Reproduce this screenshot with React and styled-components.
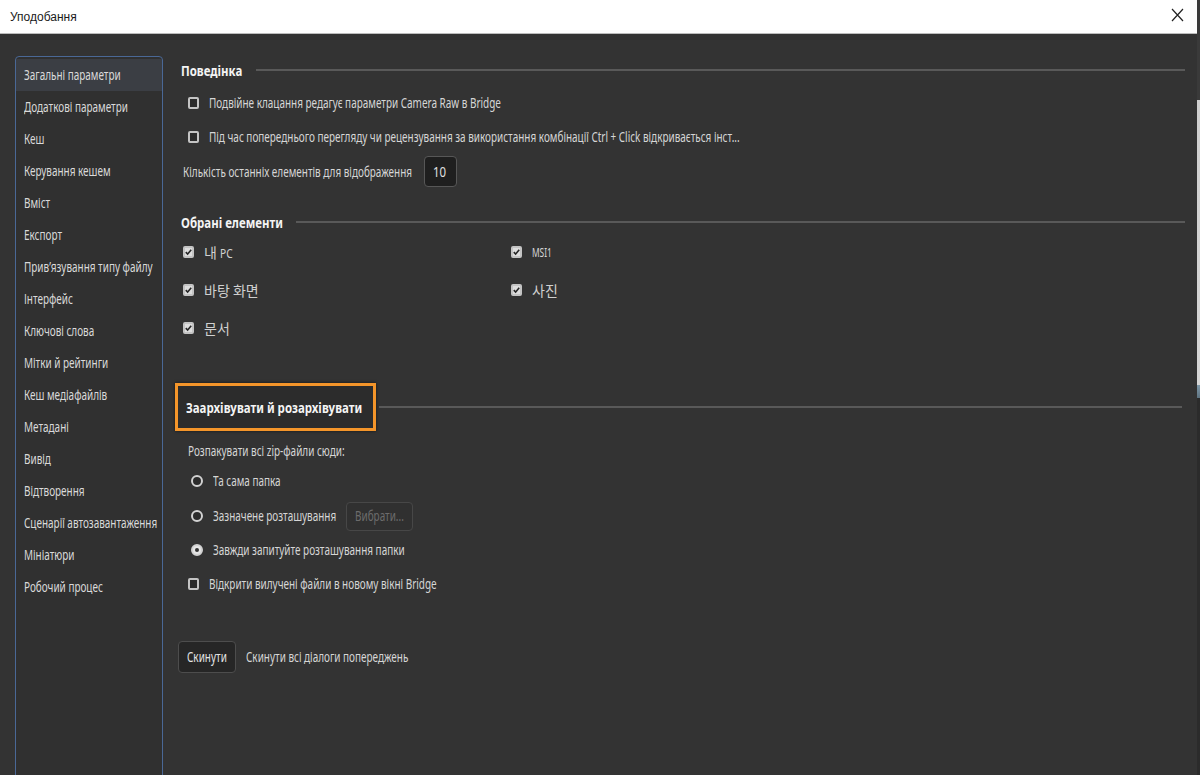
import React, { useLayoutEffect, useRef, useState } from 'react'
import styled, { createGlobalStyle } from 'styled-components'

const GlobalStyle = createGlobalStyle`
  html, body {
    margin: 0;
    padding: 0;
    width: 1200px;
    height: 775px;
    overflow: hidden;
    background: #2c2c2c;
  }
  * {
    box-sizing: border-box;
  }
`

const UI_FONT = `"Noto Sans", "Liberation Sans", "Noto Sans CJK KR", sans-serif`

// the original UI font is a condensed one, we squeeze Noto Sans to its width
const TEXT_SCALE = 0.737
const HEADER_SCALE = 0.79

const Screen = styled.div`
  display: flex;
  width: 1200px;
  height: 775px;
`

const Dialog = styled.div`
  flex: 1;
  display: flex;
  flex-direction: column;
  background: #333333;
  font-family: ${UI_FONT};
`

// piece of the window behind the dialog
const EdgeStrip = styled.div`
  width: 3px;
  background: linear-gradient(
    to bottom,
    #3a3a3a 0px,
    #3a3a3a 100px,
    #cfcfcf 100px,
    #d6d6d6 385px,
    #7f98a8 385px,
    #5d7280 398px,
    #2b2b2b 398px,
    #2b2b2b 775px
  );
`

const TitleBar = styled.div`
  height: 34px;
  flex: none;
  display: flex;
  align-items: center;
  justify-content: space-between;
  padding: 0 10px 0 10px;
  background: #ffffff;
  border-bottom: 1px solid #bcbcbc;
  color: #1b1b1b;
  font-family: "Liberation Sans", "Noto Sans", sans-serif;
  font-size: 12px;
`

const CloseButton = styled.div`
  width: 14px;
  height: 14px;
  margin-right: 2px;
  margin-top: -4px;
  display: flex;
`

const Body = styled.div`
  flex: 1;
  display: flex;
  min-height: 0;
`

const Sidebar = styled.nav`
  width: 148px;
  flex: none;
  margin: 22px 0 -12px 15px;
  border: 1px solid #4a6896;
  border-radius: 4px;
  background: #303030;
  padding-top: 2px;
`

const NavItem = styled.div`
  height: 32px;
  display: flex;
  align-items: center;
  padding-left: 8px;
  font-size: 13.5px;
  color: #dadada;
  background: ${p => (p.$active ? '#3b3e44' : 'transparent')};
  white-space: nowrap;
`

const Content = styled.main`
  flex: 1;
  padding: 26px 12px 0 18px;
  display: flex;
  flex-direction: column;
`

const SectionHeader = styled.div`
  display: flex;
  align-items: center;
  gap: ${p => p.$gap ?? 13}px;
  height: ${p => p.$h || 20}px;
  margin-top: ${p => p.$top || 0}px;
`

const HeaderTitle = styled.span`
  font-size: 14.5px;
  font-weight: bold;
  color: #f4f4f4;
  white-space: nowrap;
`

const HeaderRule = styled.div`
  flex: 1;
  height: 2px;
  background: #595959;
  margin-right: ${p => p.$inset || 0}px;
`

const HighlightBox = styled.div`
  display: flex;
  align-items: center;
  height: 48px;
  margin-left: -6px;
  padding: 0 11px 0 8px;
  border: 3px solid #f4952a;
  background: #2c2c2c;
  box-shadow: 0 0 3px rgba(0, 0, 0, 0.6);
`

const Row = styled.div`
  display: flex;
  align-items: center;
  gap: ${p => p.$gap ?? 10}px;
  height: ${p => p.$h || 24}px;
  margin-top: ${p => p.$top || 0}px;
  margin-left: ${p => p.$indent || 0}px;
  font-size: 13.5px;
  color: #d6d6d6;
  white-space: nowrap;
`

const Korean = styled.span`
  font-family: "Noto Sans CJK KR", ${UI_FONT};
  font-size: 14px;
  color: #d0d0d0;
`

const Small = styled.span`
  font-family: ${UI_FONT};
  font-size: 12px;
`

const Box = styled.span`
  width: 11px;
  height: 12px;
  flex: none;
  border-radius: 2px;
  border: 2px solid #c4c4c4;
  background: ${p => (p.$checked ? '#dedede' : '#2b2b2b')};
  display: flex;
  align-items: center;
  justify-content: center;
`

const Radio = styled.span`
  width: 12px;
  height: 12px;
  flex: none;
  border-radius: 50%;
  border: 2.5px solid #d2d2d2;
  background: ${p => (p.$checked ? '#e6e6e6' : '#2b2b2b')};
  display: flex;
  align-items: center;
  justify-content: center;

  &::after {
    content: '';
    display: ${p => (p.$checked ? 'block' : 'none')};
    width: 4px;
    height: 4px;
    border-radius: 50%;
    background: #333;
  }
`

const NumberInput = styled.div`
  width: 33px;
  height: 31px;
  margin-left: 12px;
  border: 1px solid #575757;
  border-radius: 4px;
  background: #1f1f1f;
  display: flex;
  align-items: center;
  padding-left: 8px;
  color: #e0e0e0;
`

const Grid = styled.div`
  display: grid;
  grid-template-columns: 328px 1fr;
  row-gap: 14px;
  margin-top: 8px;
  padding-left: 2px;
`

const SmallButton = styled.div`
  height: ${p => p.$h || 29}px;
  padding: 0 ${p => p.$pad || 8}px;
  border: 1px solid ${p => (p.$disabled ? '#474747' : '#4d4d4d')};
  border-radius: 4px;
  background: ${p => (p.$disabled ? '#303030' : '#262626')};
  color: ${p => (p.$disabled ? '#6c6c6c' : '#e4e4e4')};
  display: flex;
  align-items: center;
`

const FitBox = styled.span`
  display: inline-block;
  flex: none;
  white-space: nowrap;
`

const Squeezed = styled.span`
  display: inline-block;
  transform: scaleX(${p => p.$scale});
  transform-origin: 0 50%;
`

// horizontally squeezed text whose box shrinks with it
const Narrow = ({ children, scale = TEXT_SCALE }) => {
  const ref = useRef(null)
  const [width, setWidth] = useState()

  useLayoutEffect(() => {
    const measure = () => {
      if (ref.current) setWidth(ref.current.offsetWidth * scale)
    }
    measure()
    if (document.fonts) document.fonts.ready.then(measure)
  }, [scale])

  return (
    <FitBox style={width ? { width } : undefined}>
      <Squeezed ref={ref} $scale={scale}>{children}</Squeezed>
    </FitBox>
  )
}

const Check = () => (
  <svg width='9' height='8' viewBox='0 0 9 8'>
    <path d='M1 4.2 L3.4 6.6 L8 1.2' fill='none' stroke='#262626' strokeWidth='2' />
  </svg>
)

const CheckBox = ({ checked }) => (
  <Box $checked={checked}>{checked && <Check />}</Box>
)

const navItems = [
  'Загальні параметри',
  'Додаткові параметри',
  'Кеш',
  'Керування кешем',
  'Вміст',
  'Експорт',
  'Прив’язування типу файлу',
  'Інтерфейс',
  'Ключові слова',
  'Мітки й рейтинги',
  'Кеш медіафайлів',
  'Метадані',
  'Вивід',
  'Відтворення',
  'Сценарії автозавантаження',
  'Мініатюри',
  'Робочий процес'
]

const favorites = ['내 PC', 'MSI1', '바탕 화면', '사진', '문서']

const FavLabel = ({ label }) => {
  if (label === '내 PC') {
    return <Korean>내 <Narrow scale={0.85}><Small>PC</Small></Narrow></Korean>
  }
  if (/[가-힣]/.test(label)) return <Korean>{label}</Korean>
  return <Narrow scale={0.7}><Small>{label}</Small></Narrow>
}

const Header = ({ children, top }) => (
  <SectionHeader $top={top}>
    <HeaderTitle><Narrow scale={HEADER_SCALE}>{children}</Narrow></HeaderTitle>
    <HeaderRule />
  </SectionHeader>
)

export default function App () {
  return (
    <Screen>
      <GlobalStyle />
      <Dialog>
        <TitleBar>
          <span>Уподобання</span>
          <CloseButton>
            <svg width='13' height='14' viewBox='0 0 13 14'>
              <path d='M1 1 L12 13 M12 1 L1 13' stroke='#222' strokeWidth='1.2' fill='none' />
            </svg>
          </CloseButton>
        </TitleBar>
        <Body>
          <Sidebar>
            {navItems.map((item, i) => (
              <NavItem key={item} $active={i === 0}>
                <Narrow>{item}</Narrow>
              </NavItem>
            ))}
          </Sidebar>
          <Content>
            <Header>Поведінка</Header>
            <Row $top={11} $indent={7}>
              <CheckBox />
              <Narrow>Подвійне клацання редагує параметри Camera Raw в Bridge</Narrow>
            </Row>
            <Row $top={10} $indent={7}>
              <CheckBox />
              <Narrow>
                Під час попереднього перегляду чи рецензування за використання комбінації Ctrl + Click відкривається інст...
              </Narrow>
            </Row>
            <Row $top={7} $h={31} $gap={0} $indent={2}>
              <Narrow>Кількість останніх елементів для відображення</Narrow>
              <NumberInput><Narrow scale={0.85}>10</Narrow></NumberInput>
            </Row>

            <Header top={25}>Обрані елементи</Header>
            <Grid>
              {favorites.map(f => (
                <Row key={f}>
                  <CheckBox checked />
                  <FavLabel label={f} />
                </Row>
              ))}
            </Grid>

            <SectionHeader $top={43} $h={48} $gap={3}>
              <HighlightBox>
                <HeaderTitle>
                  <Narrow scale={HEADER_SCALE}>Заархівувати й розархівувати</Narrow>
                </HeaderTitle>
              </HighlightBox>
              <HeaderRule $inset={3} />
            </SectionHeader>
            <Row $top={10} $h={20} $indent={7}>
              <Narrow>Розпакувати всі zip-файли сюди:</Narrow>
            </Row>
            <Row $top={8} $indent={10}>
              <Radio />
              <Narrow>Та сама папка</Narrow>
            </Row>
            <Row $top={8} $h={30} $indent={10}>
              <Radio />
              <Narrow>Зазначене розташування</Narrow>
              <SmallButton $disabled><Narrow>Вибрати...</Narrow></SmallButton>
            </Row>
            <Row $top={7} $indent={10}>
              <Radio $checked />
              <Narrow>Завжди запитуйте розташування папки</Narrow>
            </Row>
            <Row $top={10} $indent={7}>
              <CheckBox />
              <Narrow>Відкрити вилучені файли в новому вікні Bridge</Narrow>
            </Row>
            <Row $top={45} $h={32} $gap={10} $indent={-3}>
              <SmallButton $h={32}><Narrow>Скинути</Narrow></SmallButton>
              <Narrow>Скинути всі діалоги попереджень</Narrow>
            </Row>
          </Content>
        </Body>
      </Dialog>
      <EdgeStrip />
    </Screen>
  )
}
